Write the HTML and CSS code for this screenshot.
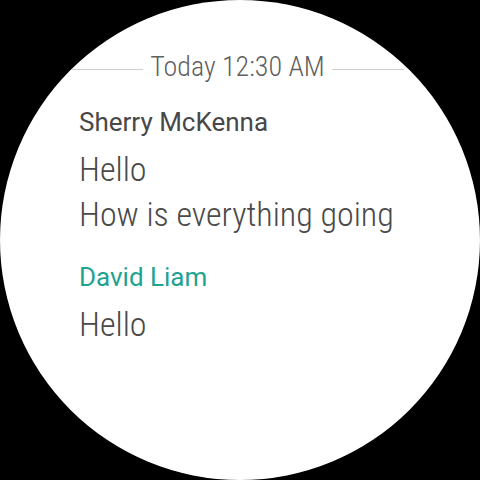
FILE: index.html
```html
<!DOCTYPE html>
<html lang="en">
<head>
    <meta charset="UTF-8">
    <meta name="viewport" content="width=device-width, initial-scale=1.0">
    <title>Chat</title>
    <link rel="stylesheet" href="styles.css">
</head>
<body>
    <div class="watch">
        <div class="date-row">
            <div class="rule"></div>
            <div class="date">Today 12:30 AM</div>
            <div class="rule"></div>
        </div>

        <div class="thread">
            <div class="message">
                <div class="sender">Sherry McKenna</div>
                <div class="text">Hello</div>
                <div class="text">How is everything going</div>
            </div>
            <div class="message">
                <div class="sender me">David Liam</div>
                <div class="text">Hello</div>
            </div>
        </div>
    </div>
</body>
</html>
```

FILE: styles.css
```css
* {
    margin: 0;
    padding: 0;
    box-sizing: border-box;
}

body {
    width: 480px;
    height: 480px;
    background-color: #000;
    font-family: Roboto, 'Noto Sans', sans-serif;
    overflow: hidden;
}

.watch {
    width: 480px;
    height: 480px;
    border-radius: 50%;
    background-color: #fff;
    overflow: hidden;
    padding-top: 50px;
}

.date-row {
    display: flex;
    align-items: center;
    gap: 7px;
    padding: 0 76px 0 71px;
}

.rule {
    flex: 1;
    height: 1px;
    margin-top: 5px;
    background-color: #cfcfcf;
}

.date {
    font-size: 28px;
    font-weight: 300;
    font-stretch: condensed;
    line-height: 34px;
    color: #5f5f5f;
}

.thread {
    padding: 20px 0 0 79px;
    display: flex;
    flex-direction: column;
    gap: 22px;
}

.sender {
    font-size: 26px;
    font-weight: 400;
    line-height: 36px;
    margin-bottom: 7px;
    color: #484848;
}

.sender.me {
    color: #1fa391;
}

.text {
    font-size: 34px;
    font-weight: 300;
    font-stretch: condensed;
    line-height: 45px;
    color: #4a4a4a;
}
```
